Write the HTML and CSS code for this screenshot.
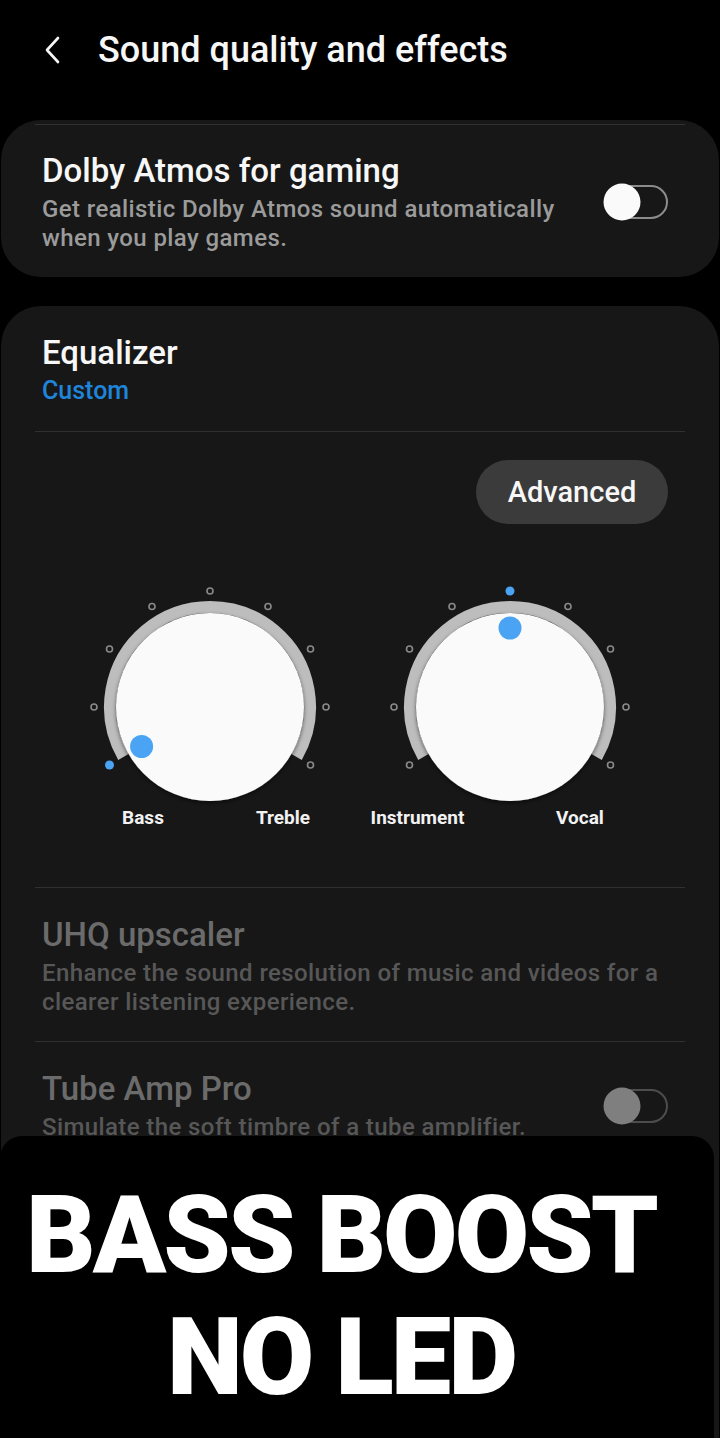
FILE: index.html
```html
<!DOCTYPE html>
<html lang="en">
<head>
  <meta charset="UTF-8">
  <meta name="viewport" content="width=device-width, initial-scale=1.0">
  <title>Sound quality and effects</title>
  <link rel="stylesheet" href="styles.css">
</head>
<body>
  <div class="page">
    <header class="header">
      <svg class="back" width="24" height="30" viewBox="0 0 24 30">
        <path d="M16 3 L5 15 L16 27" fill="none" stroke="#f5f5f5" stroke-width="2.6" stroke-linecap="round" stroke-linejoin="round"/>
      </svg>
      <h1 class="title">Sound quality and effects</h1>
    </header>

    <section class="card card-dolby">
      <div class="divider top-edge"></div>
      <div class="row">
        <div class="row-text">
          <div class="row-title">Dolby Atmos for gaming</div>
          <div class="row-sub">Get realistic Dolby Atmos sound automatically when you play games.</div>
        </div>
        <svg class="toggle" width="66" height="40" viewBox="0 0 66 40">
          <rect x="3" y="4" width="61" height="32" rx="16" fill="#171717" stroke="#8c8c8c" stroke-width="2"/>
          <circle cx="19" cy="20" r="18.5" fill="#fafafa"/>
        </svg>
      </div>
    </section>

    <section class="card card-eq">
      <div class="eq-head">
        <div class="row-title">Equalizer</div>
        <div class="eq-preset">Custom</div>
      </div>
      <div class="divider"></div>
      <div class="eq-actions">
        <button class="btn-advanced">Advanced</button>
      </div>

      <div class="dials">
        <svg class="dial" width="300" height="256" viewBox="0 0 300 256">
          <defs>
            <filter id="knobShadowA" x="-20%" y="-20%" width="140%" height="140%">
              <feDropShadow dx="0" dy="2" stdDeviation="2" flood-color="#000" flood-opacity="0.5"/>
            </filter>
          </defs>
          <path d="M63.4 176 A100 100 0 1 1 236.6 176" fill="none" stroke="#bdbdbd" stroke-width="12"/>
          <circle cx="150" cy="126" r="94" fill="#fafafa" filter="url(#knobShadowA)"/>
          <g fill="none" stroke="#8a8a8a" stroke-width="1.6">
            <circle cx="34" cy="126" r="3"/>
            <circle cx="49.5" cy="68" r="3"/>
            <circle cx="92" cy="25.5" r="3"/>
            <circle cx="150" cy="10" r="3"/>
            <circle cx="208" cy="25.5" r="3"/>
            <circle cx="250.5" cy="68" r="3"/>
            <circle cx="266" cy="126" r="3"/>
            <circle cx="250.5" cy="184" r="3"/>
          </g>
          <circle cx="49.5" cy="184" r="4.5" fill="#4aa3f3"/>
          <circle cx="81.6" cy="165.5" r="11.5" fill="#4aa3f3"/>
          <text class="dial-label" x="83" y="243" text-anchor="middle">Bass</text>
          <text class="dial-label" x="223" y="243" text-anchor="middle">Treble</text>
        </svg>
        <svg class="dial" width="300" height="256" viewBox="0 0 300 256">
          <defs>
            <filter id="knobShadowB" x="-20%" y="-20%" width="140%" height="140%">
              <feDropShadow dx="0" dy="2" stdDeviation="2" flood-color="#000" flood-opacity="0.5"/>
            </filter>
          </defs>
          <path d="M63.4 176 A100 100 0 1 1 236.6 176" fill="none" stroke="#bdbdbd" stroke-width="12"/>
          <circle cx="150" cy="126" r="94" fill="#fafafa" filter="url(#knobShadowB)"/>
          <g fill="none" stroke="#8a8a8a" stroke-width="1.6">
            <circle cx="49.5" cy="184" r="3"/>
            <circle cx="34" cy="126" r="3"/>
            <circle cx="49.5" cy="68" r="3"/>
            <circle cx="92" cy="25.5" r="3"/>
            <circle cx="208" cy="25.5" r="3"/>
            <circle cx="250.5" cy="68" r="3"/>
            <circle cx="266" cy="126" r="3"/>
            <circle cx="250.5" cy="184" r="3"/>
          </g>
          <circle cx="150" cy="10" r="4.5" fill="#4aa3f3"/>
          <circle cx="150" cy="47" r="11.5" fill="#4aa3f3"/>
          <text class="dial-label" x="57.5" y="243" text-anchor="middle">Instrument</text>
          <text class="dial-label" x="220" y="243" text-anchor="middle">Vocal</text>
        </svg>
      </div>

      <div class="divider"></div>
      <div class="row disabled">
        <div class="row-text">
          <div class="row-title">UHQ upscaler</div>
          <div class="row-sub">Enhance the sound resolution of music and videos for a clearer listening experience.</div>
        </div>
      </div>
      <div class="divider"></div>
      <div class="row disabled">
        <div class="row-text">
          <div class="row-title">Tube Amp Pro</div>
          <div class="row-sub">Simulate the soft timbre of a tube amplifier.</div>
        </div>
        <svg class="toggle" width="66" height="40" viewBox="0 0 66 40">
          <rect x="3" y="4" width="61" height="32" rx="16" fill="#171717" stroke="#4d4d4d" stroke-width="2"/>
          <circle cx="19" cy="20" r="18.5" fill="#7f7f7f"/>
        </svg>
      </div>
    </section>

    <div class="banner">
      <div class="banner-line">BASS BOOST</div>
      <div class="banner-line">NO LED</div>
    </div>
  </div>
</body>
</html>
```

FILE: styles.css
```css
body {
  margin: 0;
  background: #000;
  font-family: Roboto, "Noto Sans", "Liberation Sans", sans-serif;
  color: #f7f7f7;
}
.page {
  position: relative;
  width: 720px;
  height: 1438px;
  overflow: hidden;
}
.header {
  display: flex;
  align-items: center;
  height: 100px;
  padding-left: 42px;
  gap: 32px;
}
.back {
  flex: none;
}
.title {
  margin: 0;
  font-size: 36px;
  font-weight: 500;
}
.card {
  background: #171717;
  border-radius: 40px;
  margin: 0 1px;
}
.card-dolby {
  margin-top: 20px;
  padding-top: 4px;
  padding-bottom: 24px;
}
.card-eq {
  margin-top: 29px;
  padding-top: 27px;
  height: 1200px;
}
.divider {
  height: 1px;
  background: #303030;
  margin: 0 34px;
}
.top-edge {
  margin-bottom: 26px;
}
.row {
  display: flex;
  align-items: center;
  gap: 30px;
  padding: 0 50px 0 41px;
}
.row-text {
  flex: 1;
}
.row-title {
  font-size: 33px;
  font-weight: 500;
  line-height: 40px;
}
.row-sub {
  margin-top: 4px;
  font-size: 24px;
  font-weight: 500;
  line-height: 29px;
  letter-spacing: 0.4px;
  color: #9b9b9b;
}
.toggle {
  flex: none;
}
.eq-head {
  padding: 0 41px 25px;
}
.eq-preset {
  margin-top: 3px;
  font-size: 25px;
  line-height: 30px;
  font-weight: 500;
  color: #1f85db;
}
.eq-actions {
  display: flex;
  justify-content: flex-end;
  padding: 28px 51px 0;
}
.btn-advanced {
  height: 64px;
  width: 192px;
  border: none;
  border-radius: 32px;
  background: #3b3b3b;
  color: #f7f7f7;
  font-family: inherit;
  font-size: 29px;
  font-weight: 500;
}
.dials {
  display: flex;
  justify-content: center;
  margin: 57px 0 50px;
}
.dial-label {
  font-family: Roboto, "Noto Sans", sans-serif;
  font-size: 19px;
  font-weight: 700;
  fill: #f2f2f2;
}
.disabled .row-title {
  color: #6b6b6b;
}
.disabled .row-sub {
  color: #575757;
}
.card-eq .row {
  padding-top: 27px;
  padding-bottom: 24px;
}
.banner {
  position: absolute;
  left: 0;
  top: 1136px;
  width: 714px;
  height: 302px;
  background: #000;
  border-radius: 22px 22px 0 0;
  padding: 38px 32px 0 0;
  box-sizing: border-box;
  text-align: center;
}
.banner-line {
  font-family: Roboto, "Liberation Sans", sans-serif;
  font-size: 108px;
  font-weight: 900;
  line-height: 122px;
  letter-spacing: -3px;
  color: #fff;
}
```
